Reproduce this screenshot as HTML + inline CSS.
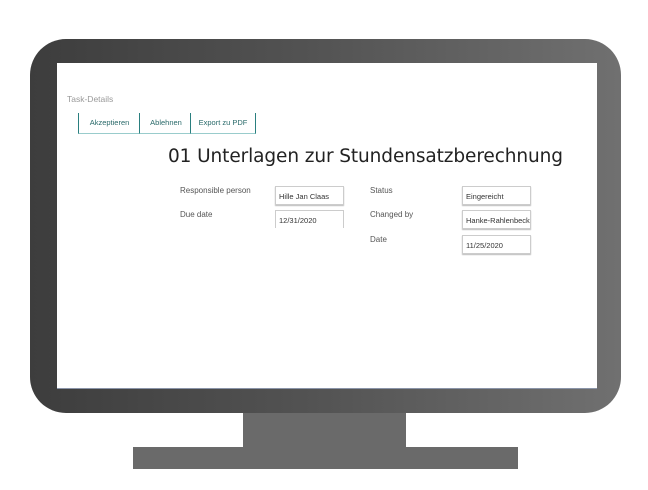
<!DOCTYPE html>
<html><head><style>
body{margin:0;width:648px;height:490px;background:#fff;position:relative;overflow:hidden;font-family:"Liberation Sans",sans-serif}
.mon{position:absolute;left:30px;top:39px;width:591px;height:374px;border-radius:36px;background:linear-gradient(90deg,#3d3d3d,#545454 50%,#707070)}
.scr{position:absolute;left:57px;top:63px;width:540px;height:325px;background:#fff;border-bottom:1px solid #8a94a8}
.neck{position:absolute;left:243px;top:413px;width:163px;height:34px;background:#6a6a6a}
.base{position:absolute;left:133px;top:447px;width:385px;height:22px;background:#6a6a6a}
.t{position:absolute;font-size:8px;color:#555;white-space:nowrap}
.tab{position:absolute;top:113px;height:20px;border-left:1px solid #2a7f7f;border-bottom:1px solid #9cc;font-size:7.5px;color:#2a6a6a;line-height:20px;text-align:center}
.in{position:absolute;width:69px;height:19px;border:1px solid #ccc;box-shadow:0 1px 1px #bbb;font-size:7.5px;color:#333;line-height:19px;padding-left:3px;box-sizing:border-box;overflow:hidden;white-space:nowrap}
</style></head><body>
<div class="mon"></div><div class="scr"></div><div class="neck"></div><div class="base"></div>
<div class="t" style="left:67px;top:94px;color:#999;font-size:8.5px">Task-Details</div>
<div class="tab" style="left:78px;width:61px">Akzeptieren</div>
<div class="tab" style="left:139px;width:52px">Ablehnen</div>
<div class="tab" style="left:190px;width:64px;border-right:1px solid #2a7f7f">Export zu PDF</div>
<div class="t" style="left:168px;top:146px;font-size:18.5px;color:#222;font-family:'DejaVu Sans',sans-serif;letter-spacing:-0.1px">01 Unterlagen zur Stundensatzberechnung</div>
<div class="t" style="left:180px;top:186px">Responsible person</div>
<div class="t" style="left:180px;top:210px">Due date</div>
<div class="in" style="left:275px;top:186px">Hille Jan Claas</div>
<div class="in" style="left:275px;top:210px;height:18px;box-shadow:none;border-bottom:none">12/31/2020</div>
<div class="t" style="left:370px;top:186px">Status</div>
<div class="t" style="left:370px;top:210px">Changed by</div>
<div class="t" style="left:370px;top:235px">Date</div>
<div class="in" style="left:462px;top:186px">Eingereicht</div>
<div class="in" style="left:462px;top:210px">Hanke-Rahlenbeck</div>
<div class="in" style="left:462px;top:235px">11/25/2020</div>
</body></html>
